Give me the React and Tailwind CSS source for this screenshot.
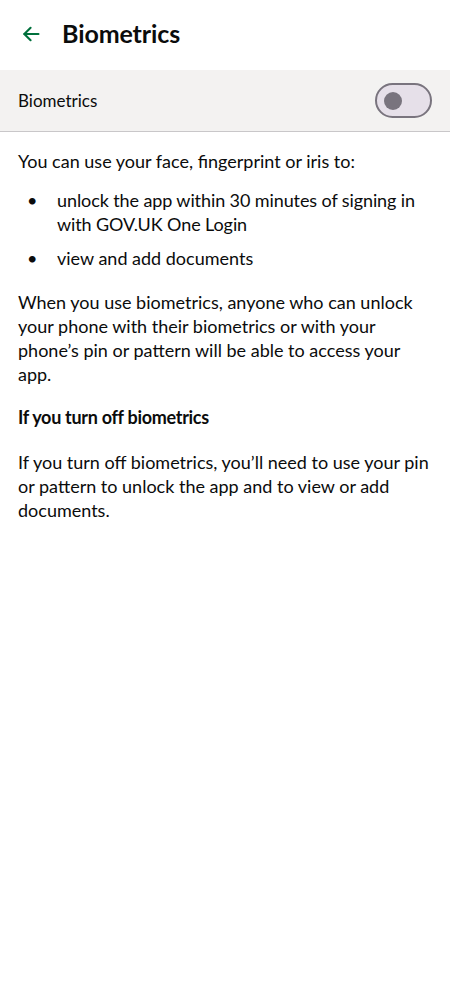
import React, { useState } from 'react'

const font = { fontFamily: 'Lato, "Noto Sans", sans-serif' }

const BackArrow = () => (
    <svg width="20" height="20" viewBox="0 0 24 24" fill="none" stroke="#00703c" strokeWidth="2.5" strokeLinecap="round" strokeLinejoin="round">
        <path d="M21 12H4" />
        <path d="M11.5 4.5L4 12L11.5 19.5" />
    </svg>
)

const Toggle = ({ on, onChange }) => (
    <button
        onClick={() => onChange(!on)}
        className="w-[57px] h-[35px] rounded-full border-2 border-[#79747e] bg-[#e6e0e9] flex items-center px-[7px]"
    >
        <span className="w-[18px] h-[18px] rounded-full bg-[#79747e] block" />
    </button>
)

const App = () => {
    const [enabled, setEnabled] = useState(false)

    return (
        <div className="w-[450px] min-h-[1000px] bg-white text-[#0b0c0c]" style={font}>
            <div className="h-[70px] flex items-center pl-[21px] gap-[21px] pb-[2px]">
                <BackArrow />
                <h1 className="text-[25px] font-bold tracking-[-0.1px]">Biometrics</h1>
            </div>

            <div className="h-[62px] bg-[#f3f2f1] border-b border-[#c9c7c9] flex items-center justify-between px-[18px]">
                <span className="text-[17px]">Biometrics</span>
                <Toggle on={enabled} onChange={setEnabled} />
            </div>

            <div className="px-[18px] pt-[17px] text-[18px] leading-[24px]">
                <p>You can use your face, fingerprint or iris to:</p>
                <ul className="mt-[15px] flex flex-col gap-[10px]">
                    <li className="flex">
                        <span className="w-[39px] shrink-0 pl-[9px]">•</span>
                        <span className="tracking-[-0.1px]">unlock the app within 30 minutes of signing in with GOV.UK One Login</span>
                    </li>
                    <li className="flex">
                        <span className="w-[39px] shrink-0 pl-[9px]">•</span>
                        <span>view and add documents</span>
                    </li>
                </ul>
                <p className="mt-[20px]">
                    When you use biometrics, anyone who can unlock your phone with their biometrics or with your phone’s pin or pattern will be able to access your app.
                </p>
                <h2 className="mt-[19px] font-bold tracking-[-0.3px]">If you turn off biometrics</h2>
                <p className="mt-[21px]">
                    If you turn off biometrics, you’ll need to use your pin or pattern to unlock the app and to view or add documents.
                </p>
            </div>
        </div>
    )
}

export default App
